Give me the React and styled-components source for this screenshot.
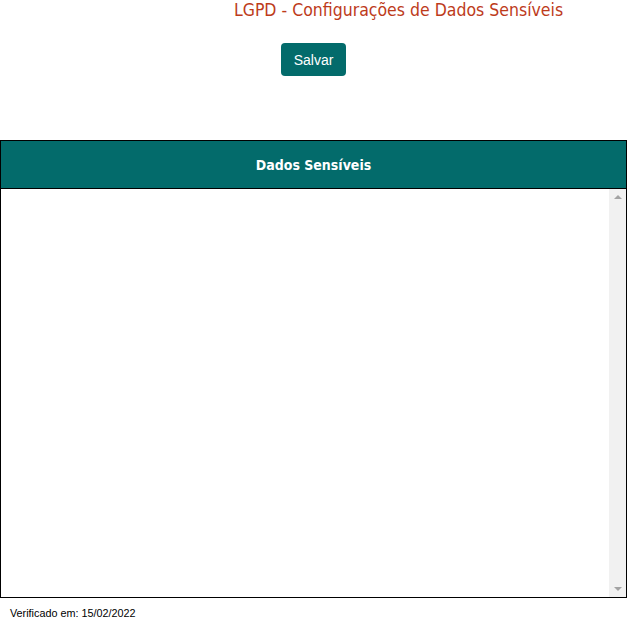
import React from "react";
import styled, { createGlobalStyle } from "styled-components";

const GlobalStyle = createGlobalStyle`
  html, body {
    margin: 0;
    padding: 0;
    background: #ffffff;
  }
  body {
    font-family: "Liberation Sans", Arial, sans-serif;
  }
`;

const Page = styled.div`
  width: 627px;
  height: 628px;
  display: flex;
  flex-direction: column;
`;

const Title = styled.h1`
  margin: 0;
  padding-left: 170px;
  text-align: center;
  font-family: "DejaVu Sans Condensed", "DejaVu Sans", Verdana, sans-serif;
  font-weight: normal;
  font-size: 17.5px;
  line-height: 20px;
  color: #bd3b1b;
`;

const Actions = styled.div`
  display: flex;
  justify-content: center;
  padding-top: 23px;
`;

const Button = styled.button`
  height: 33px;
  padding: 0 13px;
  border: none;
  border-radius: 4px;
  background: #036b6b;
  color: #ffffff;
  font-family: "Liberation Sans", Arial, sans-serif;
  font-size: 14px;
  cursor: pointer;
`;

const Panel = styled.section`
  margin-top: 64px;
  height: 456px;
  border: 1px solid #000000;
  display: flex;
  flex-direction: column;
`;

const PanelHeader = styled.div`
  height: 47px;
  flex-shrink: 0;
  border-bottom: 1px solid #000000;
  background: #036b6b;
  color: #ffffff;
  display: flex;
  align-items: center;
  justify-content: center;
  font-family: "DejaVu Sans Condensed", "DejaVu Sans", Verdana, sans-serif;
  font-weight: bold;
  font-size: 14px;
`;

const PanelBody = styled.div`
  flex: 1;
  display: flex;
`;

const Content = styled.div`
  flex: 1;
`;

const Track = styled.div`
  width: 17px;
  background: #f1f1f1;
  display: flex;
  flex-direction: column;
  justify-content: space-between;
  align-items: center;
  padding: 6px 0;
`;

const Arrow = styled.span`
  width: 0;
  height: 0;
  border-left: 4px solid transparent;
  border-right: 4px solid transparent;
  ${(p) =>
    p.$down
      ? "border-top: 4px solid #a3a3a3;"
      : "border-bottom: 4px solid #a3a3a3;"}
`;

const Footer = styled.div`
  padding: 9px 0 0 10px;
  font-size: 10.8px;
  color: #000000;
`;

export default function App() {
  return (
    <Page>
      <GlobalStyle />
      <Title>LGPD - Configurações de Dados Sensíveis</Title>
      <Actions>
        <Button>Salvar</Button>
      </Actions>
      <Panel>
        <PanelHeader>Dados Sensíveis</PanelHeader>
        <PanelBody>
          <Content />
          <Track>
            <Arrow />
            <Arrow $down />
          </Track>
        </PanelBody>
      </Panel>
      <Footer>Verificado em: 15/02/2022</Footer>
    </Page>
  );
}
